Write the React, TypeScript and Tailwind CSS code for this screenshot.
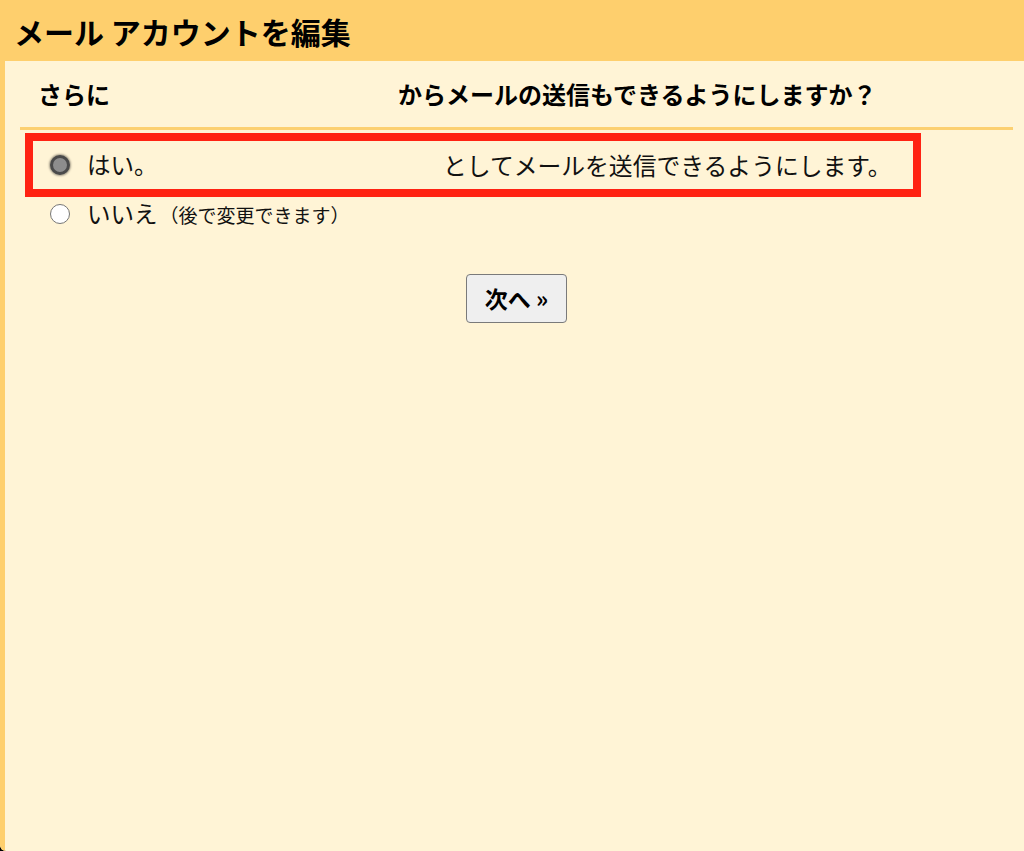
import React from "react";

const jp = { fontFamily: '"Noto Sans CJK JP", "Noto Sans", sans-serif' };

export default function App() {
  return (
    <div className="w-[1024px] h-[851px] bg-black" style={jp}>
      <div className="w-full h-full flex flex-col bg-[#fff4d6] rounded-bl-[6px] overflow-hidden">
        <div className="h-[61px] shrink-0 bg-[#fecf6d] flex items-center pl-[14px]">
          <span className="text-[30px] font-bold text-black leading-none">メール アカウントを編集</span>
        </div>
        <div className="flex-1 border-l-[5px] border-[#fecf6d] flex flex-col">
          <div className="h-[66px] flex items-center text-[24px] font-bold text-black leading-none">
            <span className="ml-[33px] w-[360px]">さらに</span>
            <span>からメールの送信もできるようにしますか？</span>
          </div>
          <div className="ml-[15px] mr-[11px] flex flex-col">
            <div className="h-[3px] bg-[#fcd071]" />
            <div className="mt-[3px] ml-[5px] w-[896px] h-[64px] border-[8px] border-[#ff2212] flex items-center leading-none">
              <div className="ml-[17px] w-[20px] h-[20px] rounded-full bg-[#8d8d8d] border-[3px] border-[#4a4a4a] shadow-[0_0_2px_1px_rgba(0,0,0,0.35)]" />
              <span className="ml-[17px] w-[356px] text-[23.5px] text-[#111]">はい。</span>
              <span className="text-[23.8px] text-[#111]">としてメールを送信できるようにします。</span>
            </div>
            <div className="mt-[7px] ml-[30px] flex items-center h-[20px] leading-none">
              <div className="w-[20px] h-[20px] rounded-full bg-white border border-[#767676]" />
              <span className="ml-[17px] text-[23.5px] text-[#111]">いいえ</span>
              <span className="ml-[2px] text-[19px] text-[#111]">（後で変更できます）</span>
            </div>
            <div className="flex justify-center mt-[50px]">
              <button className="w-[101px] h-[49px] bg-[#efefef] border-[1.5px] border-[#7a7a7a] rounded-[4px] text-[23px] font-bold text-black flex items-center justify-center leading-none">
                次へ »
              </button>
            </div>
          </div>
        </div>
      </div>
    </div>
  );
}
